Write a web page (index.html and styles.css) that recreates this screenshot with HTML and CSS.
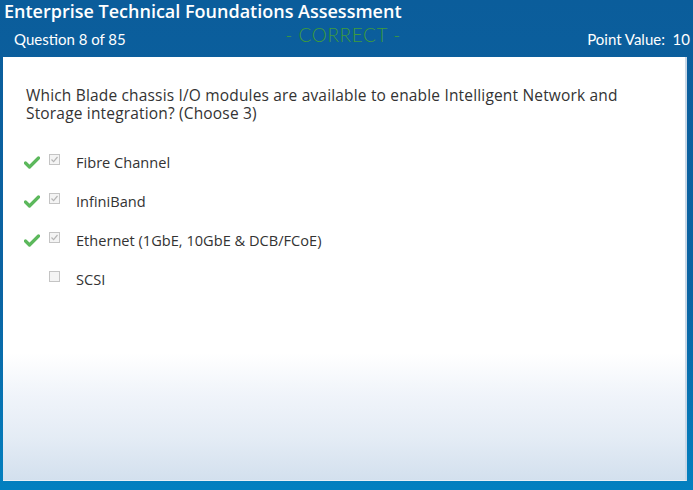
FILE: index.html
```html
<!DOCTYPE html>
<html>
<head>
<meta charset="utf-8">
<link rel="stylesheet" href="styles.css">
</head>
<body>
<div class="app">
  <header class="top">
    <div class="title">Enterprise Technical Foundations Assessment</div>
    <div class="sub">
      <span class="qnum">Question 8 of 85</span>
      <span class="status">- CORRECT -</span>
      <span class="points">Point Value:&nbsp; 10</span>
    </div>
  </header>
  <main class="panel">
    <p class="question">Which Blade chassis I/O modules are available to enable Intelligent Network and Storage integration? (Choose 3)</p>
    <ul class="options">
      <li class="opt"><span class="mark"><svg viewBox="0 0 16 13" width="16" height="13"><path d="M1.5 7 L5.5 11 L14.5 2" fill="none" stroke="#5cb85c" stroke-width="3.2" stroke-linecap="round" stroke-linejoin="round"/></svg></span><span class="box checked"><svg viewBox="0 0 11 11" width="11" height="11"><path d="M2.5 5.5 L4.6 7.6 L8.5 3" fill="none" stroke="#b5b5b5" stroke-width="1.2"/></svg></span><span class="label">Fibre Channel</span></li>
      <li class="opt"><span class="mark"><svg viewBox="0 0 16 13" width="16" height="13"><path d="M1.5 7 L5.5 11 L14.5 2" fill="none" stroke="#5cb85c" stroke-width="3.2" stroke-linecap="round" stroke-linejoin="round"/></svg></span><span class="box checked"><svg viewBox="0 0 11 11" width="11" height="11"><path d="M2.5 5.5 L4.6 7.6 L8.5 3" fill="none" stroke="#b5b5b5" stroke-width="1.2"/></svg></span><span class="label">InfiniBand</span></li>
      <li class="opt"><span class="mark"><svg viewBox="0 0 16 13" width="16" height="13"><path d="M1.5 7 L5.5 11 L14.5 2" fill="none" stroke="#5cb85c" stroke-width="3.2" stroke-linecap="round" stroke-linejoin="round"/></svg></span><span class="box checked"><svg viewBox="0 0 11 11" width="11" height="11"><path d="M2.5 5.5 L4.6 7.6 L8.5 3" fill="none" stroke="#b5b5b5" stroke-width="1.2"/></svg></span><span class="label">Ethernet (1GbE, 10GbE &amp; DCB/FCoE)</span></li>
      <li class="opt"><span class="mark"></span><span class="box"></span><span class="label">SCSI</span></li>
    </ul>
  </main>
</div>
</body>
</html>
```
FILE: styles.css
```css
* { box-sizing: border-box; }
html, body { margin: 0; padding: 0; }
body {
  width: 693px;
  height: 490px;
  overflow: hidden;
  background: linear-gradient(to bottom, #0b5d9b 0%, #0a64a3 60%, #0579b8 90%, #0380c0 100%);
  font-family: "Open Sans", "Liberation Sans", sans-serif;
}
.app {
  display: flex;
  flex-direction: column;
  height: 490px;
  padding: 0 6px 9px 3px;
}
.top {
  color: #fff;
  font-family: Lato, "Open Sans", sans-serif;
}
.title {
  font-family: "Open Sans", sans-serif;
  font-size: 18px;
  font-weight: 600;
  line-height: 22px;
  padding: 0 0 0 1px;
}
.sub {
  display: grid;
  grid-template-columns: 1fr auto 1fr;
  align-items: center;
  height: 35px;
  padding: 0 0 1px 11px;
  margin-right: -3px;
  font-size: 15px;
}
.status {
  color: #3e9b3b;
  font-size: 19px;
  font-weight: 300;
  letter-spacing: 0.6px;
  margin-top: -9px;
  margin-left: -18px;
}
.points { justify-self: end; }
.panel {
  flex: 1;
  background: linear-gradient(to bottom, #ffffff 0%, #ffffff 70%, #f0f4fa 80%, #e4ecf5 90%, #d3e0ee 100%);
  border-right: 2px solid #c9d7e6;
  border-bottom: 1px solid #e9eff6;
  padding: 29px 20px 0 23px;
  color: #333;
}
.question {
  margin: 0 0 20px 0;
  font-size: 15.5px;
  line-height: 18px;
  letter-spacing: 0.17px;
}
.options {
  list-style: none;
  margin: 0;
  padding: 0;
}
.opt {
  display: flex;
  align-items: center;
  height: 39px;
}
.mark {
  width: 25px;
  margin-left: -2px;
  display: flex;
  align-items: center;
  padding-top: 1px;
}
.box {
  width: 11px;
  height: 11px;
  border: 1px solid #c4c4c4;
  background: #f4f4f4;
  margin-top: -4px;
  display: flex;
}
.box svg { margin: -1px; }
.label {
  margin-left: 16px;
  font-size: 14.6px;
  color: #333;
}
```
